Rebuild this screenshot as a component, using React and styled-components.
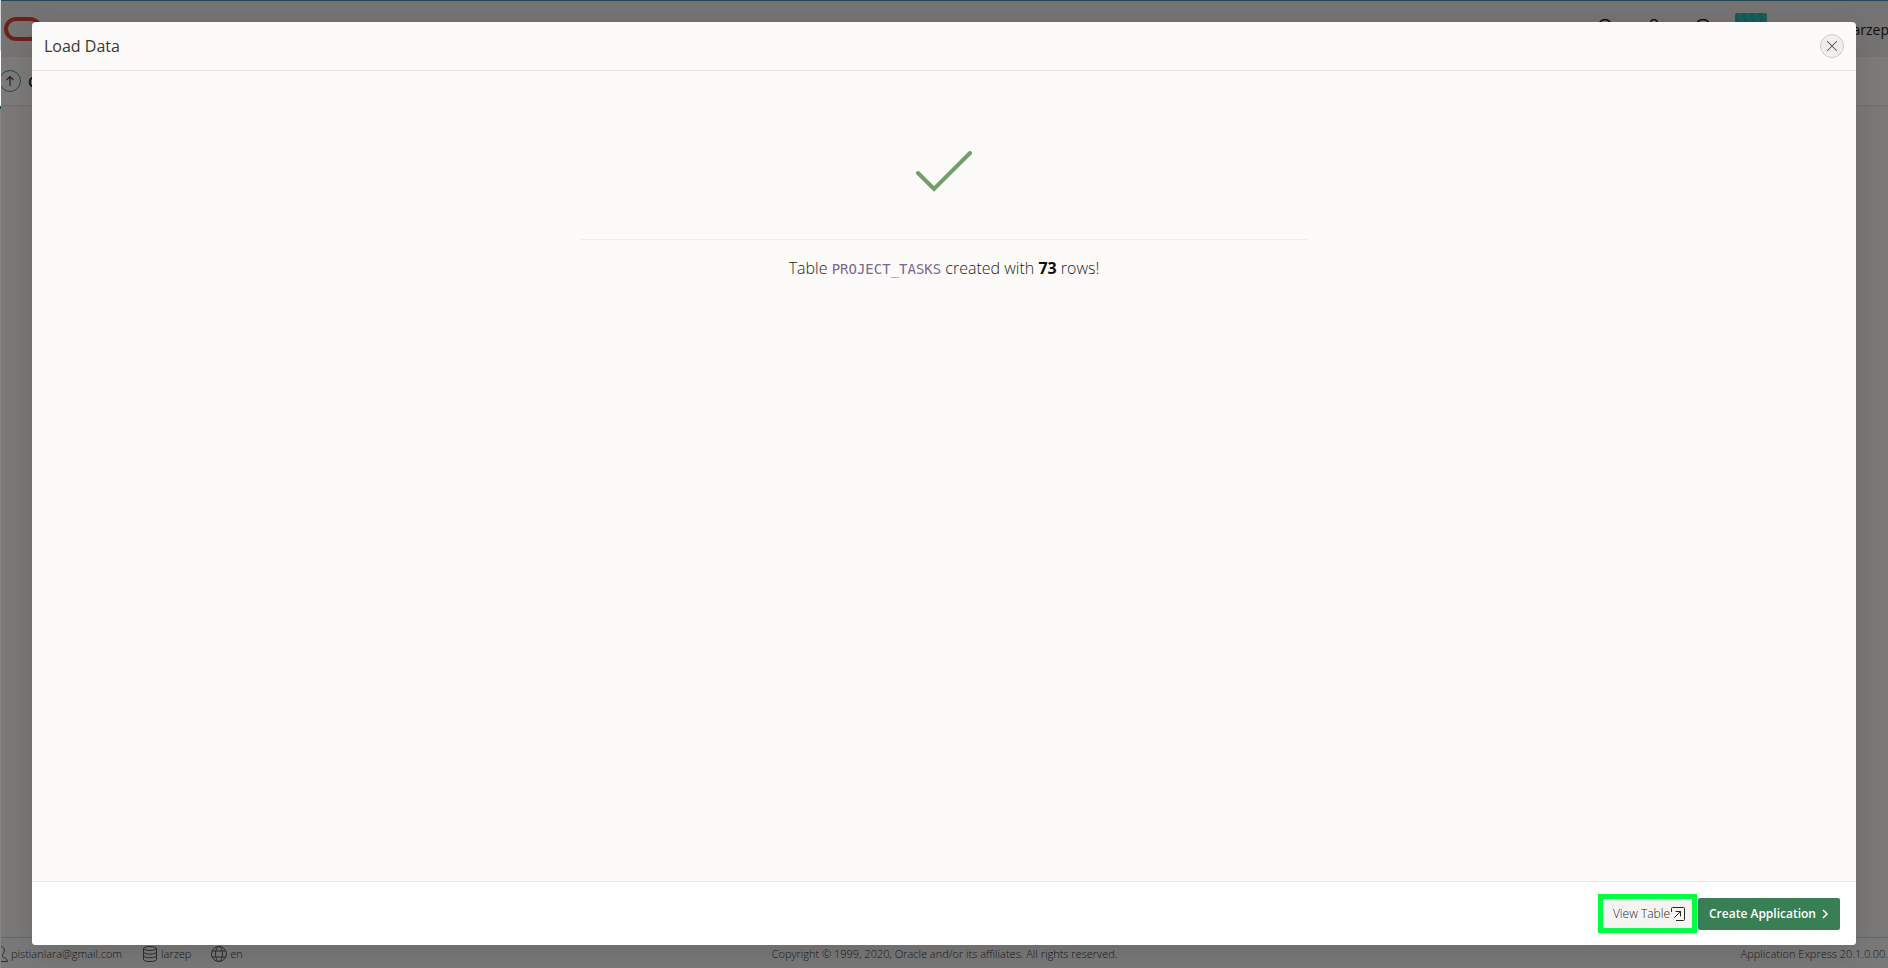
import React from "react";
import styled, { createGlobalStyle } from "styled-components";

const sans = `"Open Sans", "Noto Sans", sans-serif`;

const GlobalStyle = createGlobalStyle`
  *, *::before, *::after { box-sizing: border-box; }
  body { margin: 0; font-family: ${sans}; color: #1a1816; overflow: hidden; }
  button { font-family: inherit; cursor: pointer; }
`;

const Page = styled.div`
  display: flex;
  height: 100vh;
  overflow: hidden;
`;

const Edge = styled.div`
  flex: none;
  display: flex;
  flex-direction: column;
  width: 1px;
  background: #868686;
`;

const EdgePart = styled.span`
  height: ${(p) => p.$height}px;
  background: ${(p) => p.$color};
`;

const Shell = styled.div`
  flex: 1;
  min-width: 0;
  display: flex;
  flex-direction: column;
  position: relative;
  overflow: hidden;
`;

const TopBar = styled.header`
  flex: none;
  display: flex;
  justify-content: space-between;
  height: 57px;
  padding-left: 3px;
  background: #ece9e6;
  border-top: 1px solid #4c8cab;
`;

const Logo = styled.svg`
  margin-top: 16px;
`;

const TopActions = styled.div`
  display: flex;
  align-items: flex-start;
  gap: 24px;
  padding-top: 18px;
`;

const ActionIcons = styled.div`
  display: flex;
  gap: 33px;
`;

const Account = styled.div`
  display: flex;
  align-items: flex-start;
  width: 153px;
  font-size: 14px;
  line-height: 20px;
`;

const Avatar = styled.span`
  flex: none;
  width: 32px;
  height: 32px;
  margin: -6px 82px 0 0;
  border-radius: 2px;
  background: repeating-linear-gradient(80deg, #33bdb8 0 5px, #2db0ac 5px 8px);
`;

const AccountName = styled.span`
  padding-top: 1px;
`;

const SubBar = styled.nav`
  flex: none;
  display: flex;
  align-items: center;
  gap: 7px;
  height: 49px;
  font-size: 14px;
  font-weight: 600;
  background: #f8f6f3;
  border-bottom: 1px solid #dedbd8;
`;

const Workspace = styled.main`
  flex: 1;
  background: #f4f2ef;
`;

const StatusBar = styled.footer`
  flex: none;
  display: grid;
  grid-template-columns: 1fr auto 1fr;
  align-items: center;
  height: 31px;
  padding-top: 2px;
  font-size: 11px;
  line-height: 16px;
  font-weight: 300;
  color: #333;
  background: #f2f2f2;
  border-top: 1px solid #d2cec9;
  white-space: nowrap;

  svg { color: #5a5a5a; }
`;

const StatusItems = styled.div`
  display: flex;
  gap: 20px;
`;

const StatusItem = styled.span`
  display: flex;
  align-items: center;
  gap: 3px;
`;

const Version = styled.span`
  justify-self: end;
`;

const Overlay = styled.div`
  position: absolute;
  inset: 0;
  display: flex;
  padding: 22px 32px 23px 31px;
  background: rgba(0, 0, 0, 0.5);
`;

const Dialog = styled.section`
  flex: 1;
  min-width: 0;
  display: flex;
  flex-direction: column;
  border-radius: 4px;
  overflow: hidden;
  background: #fcfbf9;
  box-shadow: 0 8px 32px rgba(0, 0, 0, 0.12);
`;

const DialogHeader = styled.header`
  display: flex;
  align-items: center;
  justify-content: space-between;
  height: 49px;
  padding: 0 12px;
  border-bottom: 1px solid #e8e6e4;
`;

const Title = styled.h1`
  margin: 0;
  font-size: 16px;
  line-height: 24px;
  font-weight: 500;
  color: #3a3632;
`;

const CloseButton = styled.button`
  display: grid;
  place-items: center;
  width: 24px;
  height: 24px;
  padding: 0;
  border: 1px solid #cfcdcb;
  border-radius: 50%;
  background: #f0efed;
  color: #55504c;
`;

const DialogBody = styled.div`
  flex: 1;
  display: flex;
  flex-direction: column;
  align-items: center;
  padding-top: 80px;
`;

const Result = styled.div`
  display: flex;
  flex-direction: column;
  align-items: center;
  width: 40%;
  max-width: 728px;
`;

const Divider = styled.hr`
  width: 100%;
  margin: 47px 0 16px;
  border: 0;
  border-top: 1px solid #f0efed;
`;

const Message = styled.p`
  margin: 0;
  font-size: 16px;
  line-height: 24px;
  font-weight: 300;
  color: #1f1c1a;
  white-space: nowrap;

  strong { color: #100f0e; font-weight: 700; }
`;

const TableName = styled.code`
  font-family: "DejaVu Sans Mono", monospace;
  font-size: 14px;
  color: #806592;
`;

const DialogFooter = styled.footer`
  display: flex;
  align-items: center;
  justify-content: flex-end;
  gap: 1px;
  height: 64px;
  padding: 0 16px;
  background: #fff;
  border-top: 1px solid #e8e6e4;
`;

const ActionButton = styled.button`
  display: flex;
  align-items: center;
  justify-content: center;
  font-size: 12px;
  line-height: 16px;
  white-space: nowrap;
`;

const ViewButton = styled(ActionButton)`
  width: 99px;
  height: 39px;
  padding: 0 0 0 4px;
  border: 5px solid #00ff40;
  background: #f5f4f2;
  color: #2b2723;
  font-weight: 300;
`;

const CreateButton = styled(ActionButton)`
  gap: 6px;
  width: 142px;
  height: 32px;
  padding: 0;
  border: 0;
  border-radius: 2px;
  background: #397f55;
  color: #fff;
  font-weight: 600;
`;

const Icon = ({ size = 16, children, width = 1 }) => (
  <svg width={size} height={size} viewBox="0 0 16 16" fill="none" stroke="currentColor"
    strokeWidth={width} strokeLinecap="round" strokeLinejoin="round" aria-hidden="true">
    {children}
  </svg>
);

export default function App() {
  return (
    <Page>
      <GlobalStyle />
      <Edge>
        <EdgePart $height={51} $color="#d0d7df" />
        <EdgePart $height={55} $color="#ffffff" />
        <EdgePart $height={3} $color="#174650" />
      </Edge>
      <Shell>
        <TopBar>
          <Logo width="38" height="24" viewBox="0 0 38 24" fill="none" stroke="#d8433b" strokeWidth="4" aria-hidden="true">
            <rect x="2" y="2" width="34" height="20" rx="10" />
          </Logo>
          <TopActions>
            <ActionIcons>
              <Icon><circle cx="8" cy="7" r="6.5" strokeWidth="1.4" /><path d="m13 12 3 3" /></Icon>
              <Icon><circle cx="8" cy="4" r="3.5" strokeWidth="1.4" /><path d="M1 15c0-9 14-9 14 0" /></Icon>
              <Icon><circle cx="8" cy="8" r="7.5" strokeWidth="1.4" /></Icon>
            </ActionIcons>
            <Account>
              <Avatar />
              <AccountName>larzep</AccountName>
            </Account>
          </TopActions>
        </TopBar>
        <SubBar>
          <svg width="20" height="22" viewBox="1 0 20 22" fill="none" aria-hidden="true">
            <circle cx="10" cy="11" r="10.5" stroke="#4c8c9b" />
            <path d="M10 16V6.5M6.5 10 10 6.5 13.5 10" stroke="#4a4744" strokeWidth="1.2" />
          </svg>
          <span>C</span>
        </SubBar>
        <Workspace />
        <StatusBar>
          <StatusItems>
            <StatusItem>
              <svg width="7" height="16" viewBox="9 0 7 16" fill="none" stroke="currentColor" aria-hidden="true">
                <path d="M8 .5c4 0 5 3 4 5.5C11.5 8 10 9 10.5 10.5 11 11.5 15.5 12 15.5 15.5H8" />
              </svg>
              pistianlara@gmail.com
            </StatusItem>
            <StatusItem>
              <Icon>
                <ellipse cx="8" cy="2.5" rx="6.5" ry="2" />
                <path d="M1.5 2.5v11c0 2.7 13 2.7 13 0v-11M1.5 6.2c0 2.7 13 2.7 13 0M1.5 9.8c0 2.7 13 2.7 13 0" />
              </Icon>
              larzep
            </StatusItem>
            <StatusItem>
              <Icon>
                <circle cx="8" cy="8" r="7.5" />
                <ellipse cx="8" cy="8" rx="3.5" ry="7.5" />
                <path d="M1.5 5h13M1.5 11h13" />
              </Icon>
              en
            </StatusItem>
          </StatusItems>
          <span>Copyright © 1999, 2020, Oracle and/or its affiliates. All rights reserved.</span>
          <Version>Application Express 20.1.0.00.</Version>
        </StatusBar>
        <Overlay>
          <Dialog role="dialog" aria-modal="true" aria-labelledby="dialog-title">
            <DialogHeader>
              <Title id="dialog-title">Load Data</Title>
              <CloseButton type="button" aria-label="Close">
                <Icon size={12}><path d="M2 2l12 12M14 2 2 14" strokeWidth="1.4" /></Icon>
              </CloseButton>
            </DialogHeader>
            <DialogBody>
              <Result>
                <svg width="58" height="41" viewBox="0 0 58 41" fill="none" stroke="#729e6a" strokeWidth="4" strokeLinecap="round" aria-hidden="true">
                  <path d="M3 22 19 38 55 2" />
                </svg>
                <Divider />
                <Message>
                  Table <TableName>PROJECT_TASKS</TableName> created with <strong>73</strong> rows!
                </Message>
              </Result>
            </DialogBody>
            <DialogFooter>
              <ViewButton type="button">
                View Table
                <Icon><path d="M1.5 5.5v-3a1 1 0 0 1 1-1h11a1 1 0 0 1 1 1v11a1 1 0 0 1-1 1h-7M4.5 11.5l6-6M6 5.5h4.5V10" /></Icon>
              </ViewButton>
              <CreateButton type="button">
                Create Application
                <svg width="7" height="10" viewBox="0 0 7 10" fill="none" stroke="currentColor" strokeWidth="1.5" aria-hidden="true">
                  <path d="m1 1 4 4-4 4" />
                </svg>
              </CreateButton>
            </DialogFooter>
          </Dialog>
        </Overlay>
      </Shell>
    </Page>
  );
}
